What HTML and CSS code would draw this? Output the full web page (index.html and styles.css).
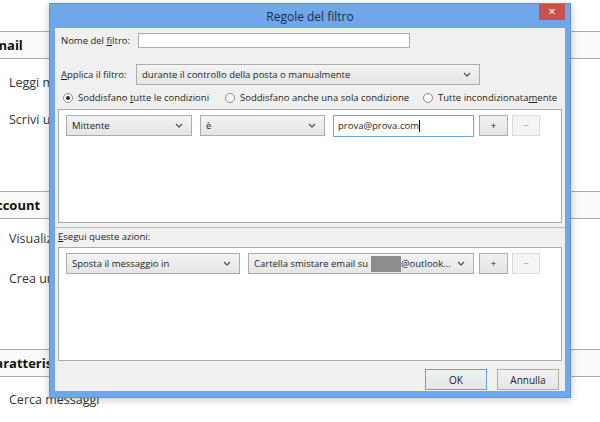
FILE: index.html
```html
<!DOCTYPE html>
<html lang="it">
<head>
<meta charset="utf-8">
<title>Regole del filtro</title>
<link rel="stylesheet" href="styles.css">
</head>
<body>
<div class="page">
  <section class="sec sec-1">
    <h2 class="sec-head"><span class="clip">Email</span></h2>
    <ul class="sec-list">
      <li class="clip">Leggi messaggi</li>
      <li class="clip">Scrivi un nuovo messaggio</li>
    </ul>
  </section>
  <section class="sec sec-2">
    <h2 class="sec-head"><span class="clip">Account</span></h2>
    <ul class="sec-list">
      <li class="clip">Visualizza impostazioni per questo account</li>
      <li class="clip">Crea un nuovo account</li>
    </ul>
  </section>
  <section class="sec sec-3">
    <h2 class="sec-head"><span class="clip">Caratteristiche avanzate</span></h2>
    <ul class="sec-list">
      <li>Cerca messaggi</li>
    </ul>
  </section>
</div>

<div class="dialog">
  <div class="titlebar">
    <span class="title">Regole del filtro</span>
    <span class="close">×</span>
  </div>
  <div class="content">
    <div class="row row-name">
      <label class="lbl lbl-name">Nome del <u>f</u>iltro:</label>
      <span class="input input-name"></span>
    </div>
    <div class="row row-apply">
      <label class="lbl lbl-apply"><u>A</u>pplica il filtro:</label>
      <span class="select select-apply"><span class="sel-text">durante il controllo della posta o manualmente</span><svg class="chev" width="8" height="5" viewBox="0 0 8 5"><path d="M1 1 L4 4 L7 1" fill="none" stroke="#555" stroke-width="1.3"/></svg></span>
    </div>
    <div class="radios">
      <span class="radio checked"><span class="circle"></span><span class="rlabel">Soddisfano <u>t</u>utte le condizioni</span></span>
      <span class="radio"><span class="circle"></span><span class="rlabel">Soddisfano anche una sola condizione</span></span>
      <span class="radio"><span class="circle"></span><span class="rlabel">Tutte incondizionata<u>m</u>ente</span></span>
    </div>
    <div class="box">
      <div class="rule">
        <span class="select sel-field"><span class="sel-text">Mittente</span><svg class="chev" width="8" height="5" viewBox="0 0 8 5"><path d="M1 1 L4 4 L7 1" fill="none" stroke="#555" stroke-width="1.3"/></svg></span>
        <span class="select sel-op"><span class="sel-text">è</span><svg class="chev" width="8" height="5" viewBox="0 0 8 5"><path d="M1 1 L4 4 L7 1" fill="none" stroke="#555" stroke-width="1.3"/></svg></span>
        <span class="input-value"><span>prova@prova.com</span><span class="caret"></span></span>
        <span class="sq">+</span>
        <span class="sq sq-off">−</span>
      </div>
    </div>
    <div class="splitter"></div>
    <div class="lbl lbl-actions"><u>E</u>segui queste azioni:</div>
    <div class="box box-actions">
      <div class="rule">
        <span class="select sel-action"><span class="sel-text">Sposta il messaggio in</span><svg class="chev" width="8" height="5" viewBox="0 0 8 5"><path d="M1 1 L4 4 L7 1" fill="none" stroke="#555" stroke-width="1.3"/></svg></span>
        <span class="select sel-folder"><span class="sel-text"><span>Cartella smistare email su</span><span class="redact"></span><span>@outlook...</span></span><svg class="chev" width="8" height="5" viewBox="0 0 8 5"><path d="M1 1 L4 4 L7 1" fill="none" stroke="#555" stroke-width="1.3"/></svg></span>
        <span class="sq">+</span>
        <span class="sq sq-off">−</span>
      </div>
    </div>
    <div class="buttons">
      <button class="btn btn-default">OK</button>
      <button class="btn">Annulla</button>
    </div>
  </div>
</div>
</body>
</html>
```
FILE: styles.css
```css
* { box-sizing: border-box; }
html, body { margin: 0; padding: 0; }
body {
  width: 600px;
  height: 422px;
  overflow: hidden;
  position: relative;
  background: #fff;
  font-family: "Open Sans", "Noto Sans", sans-serif;
  color: #1e1e1e;
}

/* background page (partly hidden by the dialog) */
.page { margin-left: -13px; padding-top: 31px; }
.clip { display: block; width: 62px; overflow: hidden; white-space: nowrap; }
.sec-head {
  margin: 0;
  height: 28px;
  line-height: 26px;
  font-size: 13px;
  font-weight: 700;
  color: #111;
  border-top: 1px solid #a9a9a9;
  border-bottom: 1px solid #a9a9a9;
  background: #fafafa;
  white-space: nowrap;
}
.sec-list {
  list-style: none;
  margin: 0;
  padding: 0 0 0 22px;
  font-size: 12.5px;
  color: #333;
  white-space: nowrap;
}
.sec-list .clip { width: 40px; }
.sec-1 .sec-list { padding-top: 5px; margin-bottom: 53px; }
.sec-1 li { height: 37px; line-height: 37px; }
.sec-2 .sec-list { margin-bottom: 50px; }
.sec-2 li { height: 40px; line-height: 40px; }
.sec-3 .sec-list { padding-top: 3px; }
.sec-3 li { height: 40px; line-height: 40px; }

/* dialog window */
.dialog {
  position: absolute;
  left: 49px;
  top: 3px;
  width: 522px;
  height: 395px;
  background: #6fa7ea;
  border: 1px solid #5a93d8;
  padding: 0 5px 6px;
  display: flex;
  flex-direction: column;
  box-shadow: 0 2px 8px rgba(0, 0, 0, 0.22);
}
.titlebar {
  height: 24px;
  position: relative;
  display: flex;
  align-items: center;
  justify-content: center;
}
.title { font-size: 12px; color: #1d2d44; }
.close {
  position: absolute;
  top: 0;
  right: 0;
  width: 26px;
  height: 16px;
  background: #c7514c;
  color: #fff;
  font-size: 13px;
  line-height: 15px;
  text-align: center;
}

.content {
  flex: 1;
  background: #f0f0f0;
  font-size: 9.5px;
  color: #1e1e1e;
  display: flex;
  flex-direction: column;
}
.row { display: flex; align-items: center; }
.lbl { white-space: nowrap; }
.row-name { margin-top: 5px; height: 15px; }
.lbl-name { width: 83px; padding-left: 6px; }
.input-name { width: 272px; height: 15px; background: #fff; border: 1px solid #abadb3; }
.row-apply { margin-top: 16px; height: 21px; }
.lbl-apply { width: 81px; padding-left: 6px; }
.select-apply { width: 344px; }

.radios {
  margin-top: 6px;
  height: 12px;
  display: grid;
  grid-template-columns: 162px 198px auto;
  padding-left: 8px;
  align-items: center;
}
.radio { display: flex; align-items: center; gap: 5px; white-space: nowrap; }
.circle {
  width: 10px;
  height: 10px;
  border: 1px solid #8a8a8a;
  border-radius: 50%;
  background: #fff;
  display: flex;
  align-items: center;
  justify-content: center;
  flex: none;
}
.radio.checked .circle::after {
  content: "";
  width: 4px;
  height: 4px;
  border-radius: 50%;
  background: #2a2a2a;
}

.box {
  margin: 6px 3px 0;
  height: 114px;
  background: #fff;
  border: 1px solid #a9a9a9;
  padding: 5px 7px;
}
.box-actions { margin-top: 3px; }
.rule { display: flex; align-items: center; height: 21px; }
.select {
  height: 21px;
  border: 1px solid #acacac;
  background: linear-gradient(#f3f3f3, #e5e5e5);
  display: flex;
  align-items: center;
  padding: 0 8px 0 5px;
  gap: 6px;
}
.sel-text { flex: 1; white-space: nowrap; overflow: hidden; display: flex; align-items: center; }
.chev { flex: none; }
.sel-field { width: 126px; }
.sel-op { width: 125px; margin-left: 8px; }
.input-value {
  width: 141px;
  height: 22px;
  margin-left: 8px;
  border: 1px solid #6aa4e3;
  background: #fff;
  padding-left: 4px;
  display: flex;
  align-items: center;
}
.caret { width: 1px; height: 12px; background: #000; }
.sq {
  width: 29px;
  height: 21px;
  margin-left: 5px;
  border: 1px solid #adadad;
  background: linear-gradient(#f2f2f2, #e3e3e3);
  display: flex;
  align-items: center;
  justify-content: center;
  flex: none;
}
.sq-off { margin-left: 4px; width: 28px; border-color: #dcdcdc; background: #f4f4f4; color: #a0a0a0; }
.sel-action { width: 174px; }
.sel-folder { width: 226px; margin-left: 8px; }
.redact { width: 30px; height: 16px; background: #8c8c8c; margin-left: 3px; flex: none; }

.splitter { margin-top: 4px; height: 1px; background: #bdbdbd; }
.lbl-actions { margin-top: 2px; height: 14px; line-height: 14px; padding-left: 3px; }

.buttons {
  margin-top: 8px;
  height: 21px;
  display: flex;
  justify-content: flex-end;
  gap: 10px;
  padding-right: 6px;
}
.btn {
  width: 62px;
  height: 21px;
  border: 1px solid #acacac;
  background: linear-gradient(#f0f0f0, #e5e5e5);
  font: inherit;
  font-size: 10px;
  color: #1e1e1e;
  padding: 0;
}
.btn-default { border-color: #6ba0d6; }
```
